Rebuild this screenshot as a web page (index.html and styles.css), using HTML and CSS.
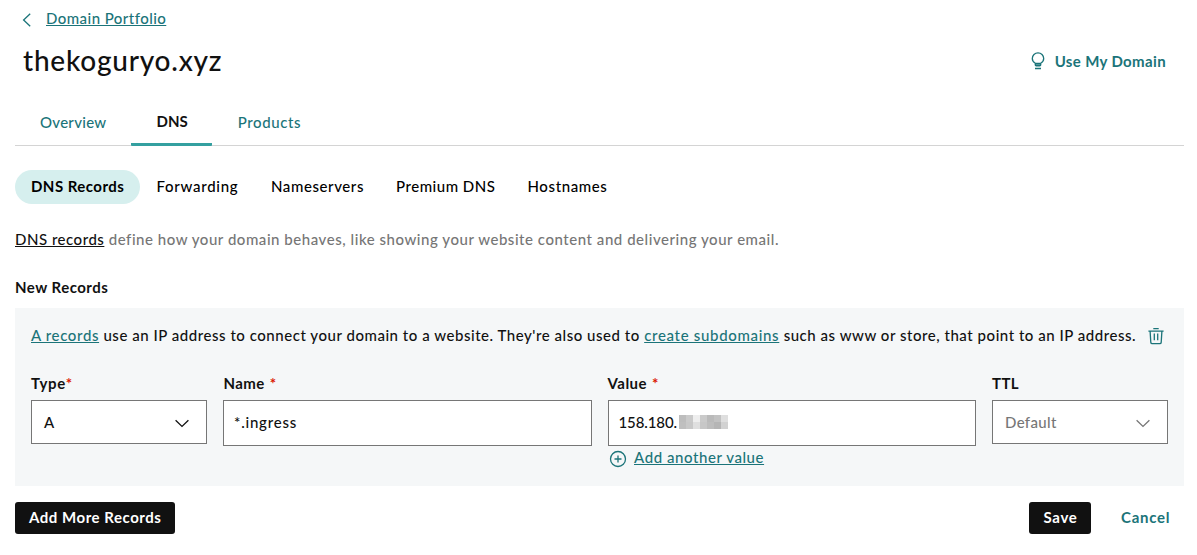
FILE: index.html
```
<!DOCTYPE html>
<html lang="en">
<head>
<meta charset="utf-8">
<title>thekoguryo.xyz</title>
<link rel="stylesheet" href="styles.css">
</head>
<body>
<nav class="crumb">
  <svg class="back" width="10" height="14" viewBox="0 0 10 14"><path d="M8.2 .8 1.6 7l6.6 6.2"/></svg>
  <a class="link portfolio" href="#">Domain Portfolio</a>
</nav>
<header class="head">
  <h1 class="title">thekoguryo.xyz</h1>
  <a class="use" href="#">
    <svg class="bulb" width="14" height="18" viewBox="0 0 14 18"><path d="M4.300 11.300C2.300 10.200 1.300 8.400 1.300 6.500a5.700 5.700 0 0 1 11.400 0c0 1.900-1 3.700-3 4.800V13a.8.8 0 0 1-.8.8H5.100a.8.8 0 0 1-.8-.8zM4.300 11.500h5.400M4.800 13.200h4.400M4 16.500h6"/></svg>
    <span>Use My Domain</span>
  </a>
</header>
<nav class="tabs">
  <a class="tab overview" href="#">Overview</a>
  <a class="tab dns" href="#">DNS</a>
  <a class="tab products" href="#">Products</a>
</nav>
<nav class="pills">
  <a class="pill active" href="#">DNS Records</a>
  <a class="pill forwarding" href="#">Forwarding</a>
  <a class="pill nameservers" href="#">Nameservers</a>
  <a class="pill premium" href="#">Premium DNS</a>
  <a class="pill hostnames" href="#">Hostnames</a>
</nav>
<p class="intro"><a class="dark-link" href="#">DNS records</a> define how your domain behaves, like showing your website content and delivering your email.</p>
<h2 class="section">New Records</h2>
<section class="panel">
  <div class="info">
    <p class="info-text"><a class="link rec" href="#">A records</a> use an IP address to connect your domain to a website. They're also used to <a class="link sub" href="#">create subdomains</a> such as www or store, that point to an IP address.</p>
    <svg class="trash" width="16" height="18" viewBox="0 0 16 18"><path d="M5.300 1.600h5.400M.4 4.100h15.200M2.100 4.100l.7 11.300a1.400 1.400 0 0 0 1.400 1.300h7.600a1.400 1.400 0 0 0 1.400-1.300l.7-11.300M6.300 6.600v6.600M9.700 6.600v6.600"/></svg>
  </div>
  <div class="fields">
    <div class="field narrow">
      <label class="label type">Type<span class="req tight">*</span></label>
      <div class="box select"><span>A</span><svg class="chev" width="14" height="9" viewBox="0 0 14 9"><path d="M.6 1.200 7 7.400l6.400-6.200"/></svg></div>
    </div>
    <div class="field">
      <label class="label name">Name<span class="req">*</span></label>
      <div class="box input"><span class="host">*.ingress</span></div>
    </div>
    <div class="field">
      <label class="label value">Value<span class="req">*</span></label>
      <div class="box input"><span class="ip">158.180.</span><span class="mask"><i class="m1"></i><i class="m2"></i><i class="m3"></i><i class="m4"></i><i class="m5"></i><i class="m6"></i><i class="m7"></i><i class="m8"></i><i class="m9"></i><i class="m10"></i><i class="m11"></i><i class="m12"></i><i class="m13"></i><i class="m14"></i></span></div>
      <div class="another">
        <svg class="plus" width="18" height="18" viewBox="0 0 18 18"><circle cx="9" cy="9" r="7.500"/><path d="M9 5.500v7M5.500 9h7"/></svg>
        <a class="link add" href="#">Add another value</a>
      </div>
    </div>
    <div class="field narrow">
      <label class="label">TTL</label>
      <div class="box select muted"><span>Default</span><svg class="chev" width="14" height="9" viewBox="0 0 14 9"><path d="M.6 1.200 7 7.400l6.400-6.200"/></svg></div>
    </div>
  </div>
</section>
<footer class="actions">
  <button class="btn more">Add More Records</button>
  <button class="btn save">Save</button>
  <a class="cancel" href="#">Cancel</a>
</footer>
</body>
</html>
```
FILE: styles.css
```
* { box-sizing: border-box; }
body {
  margin: 0;
  padding: 8px 13px 0 15px;
  background: #fff;
  color: #111;
  font: 500 15px/20px Lato, sans-serif;
  letter-spacing: .53px;
  white-space: nowrap;
}
a { color: inherit; text-decoration: none; }
h1, h2, p { margin: 0; font-weight: 500; }
svg { display: block; flex: none; fill: none; stroke: #1b7479; stroke-width: 1.3; }

.link { color: #1b7479; }
.link, .dark-link {
  text-decoration: underline;
  text-decoration-thickness: 1px;
  text-underline-offset: 1px;
  text-decoration-skip-ink: none;
}
.portfolio { letter-spacing: .45px; }

.crumb { display: flex; height: 20px; padding-left: 7px; gap: 14px; }
.back { margin-top: 5px; }

.head { display: flex; justify-content: space-between; height: 40px; margin-top: 11px; padding: 0 18px 0 8px; }
.title { font-size: 28px; line-height: 42px; letter-spacing: .76px; }
.use { display: flex; gap: 10px; padding-top: 4px; height: 40px; align-items: flex-start; margin-top: 8px; color: #1b7479; font-weight: 700; letter-spacing: .36px; }
.bulb { margin-top: 1px; }

.tabs { display: flex; height: 67px; padding: 32px 0 0 25px; border-bottom: 1px solid #d4d4d4; color: #1b7479; }
.tab { height: 35px; padding-top: 1px; }
.overview { width: 91.500px; letter-spacing: .28px; }
.dns { width: 81px; padding: 0 0 0 25.500px; border-bottom: 3px solid #34a0a0; border-radius: 1px; color: #111; font-weight: 700; letter-spacing: 0; margin-left: -.5px; }
.products { margin-left: 25.700px; letter-spacing: .6px; }

.pills { display: flex; margin-top: 24px; height: 34px; color: #000; }
.pill { padding: 6px 16px 0; }
.active { width: 125px; border-radius: 17px; background: #d6efee; font-weight: 700; letter-spacing: .46px; }
.forwarding { width: 115px; padding-left: 16.500px; letter-spacing: .73px; }
.nameservers { width: 125px; letter-spacing: .59px; }
.premium { width: 131.500px; letter-spacing: .52px; }
.hostnames { letter-spacing: .61px; }

.intro { margin-top: 25px; color: #767676; letter-spacing: .54px; }
.dark-link { color: #111; letter-spacing: .51px; }
.section { margin-top: 28px; font-size: 15px; font-weight: 700; letter-spacing: .48px; }

.panel { height: 178px; margin-top: 11px; padding: 17px 16px 0; background: #f5f7f8; }
.info { display: flex; justify-content: space-between; padding-right: 4px; }
.rec { letter-spacing: .63px; }
.info-text { letter-spacing: .535px; }
.sub { letter-spacing: .68px; }
.trash { margin-top: 2px; }
.fields { display: flex; gap: 16px; margin-top: 28px; }
.field { flex: 1; }
.narrow { flex: 0 0 176px; }
.label { display: block; height: 27px; font-weight: 700; letter-spacing: .4px; }
.type { letter-spacing: .7px; }
.name { padding-left: .5px; }
.value { letter-spacing: .5px; }
.req { margin-left: 5px; color: #db1802; }
.tight { margin-left: 0; }
.box { display: flex; border: 1px solid #767676; background: #fff; }
.select { height: 44px; padding: 11px 17px 0 12px; justify-content: space-between; }
.input { height: 46px; padding: 11px 11px 0 10px; }
.host { letter-spacing: .78px; }
.ip { width: 60px; letter-spacing: -.1px; }
.muted { color: #767676; letter-spacing: .35px; }
.chev { margin-top: 7px; stroke: #111; }
.muted .chev { stroke: #767676; }
.another { display: flex; gap: 7.500px; padding: 1px 0 0 1px; }
.plus { margin-top: 3px; }
.add { letter-spacing: .57px; }

.mask { display: grid; grid-template: 7px 7px / repeat(7, 7px); margin-top: 3px; height: 14px; }
.m1 { background: #bdbdbd; }
.m2 { background: #cacaca; }
.m3 { background: #eee; }
.m4 { background: #cacaca; }
.m5 { background: #bababa; }
.m6 { background: #c2c2c2; }
.m7 { background: #dfdfdf; }
.m8 { background: #bfbfbf; }
.m9 { background: #c8c8c8; }
.m10 { background: #dfdfdf; }
.m11 { background: #c7c7c7; }
.m12 { background: #bdbdbd; }
.m13 { background: #b5b5b5; }
.m14 { background: #d2d2d2; }

.actions { display: flex; margin-top: 16px; height: 32px; }
.btn { height: 32px; border: 0; border-radius: 3px; padding: 5px 0 7px 14px; background: #111; color: #fff; font: 700 15px/20px Lato, sans-serif; letter-spacing: .53px; text-align: left; }
.more { width: 160px; }
.save { width: 62px; margin-left: auto; padding-left: 14.500px; letter-spacing: .7px; }
.cancel { width: 63px; margin: 5px 0 0 30px; color: #1b7479; font-weight: 700; letter-spacing: .75px; }
```
